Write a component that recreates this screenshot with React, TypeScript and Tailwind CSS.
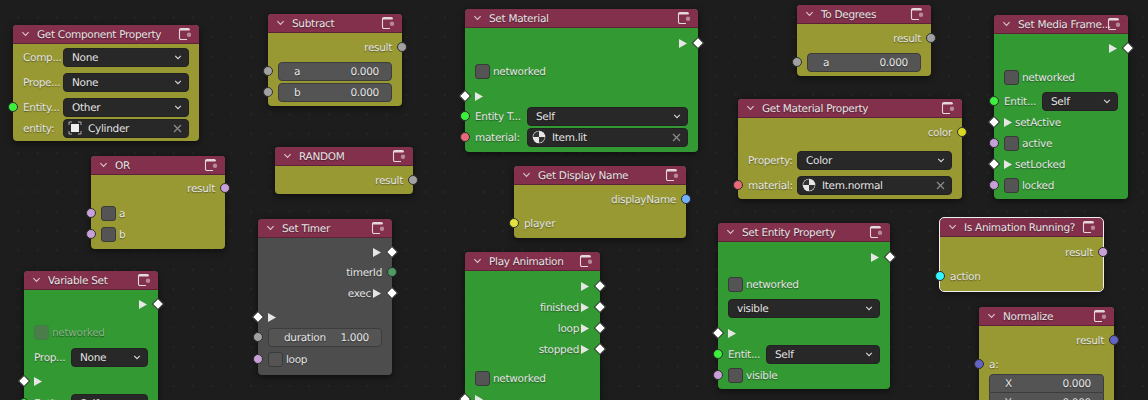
import type { ReactNode } from 'react';

const font = "font-['DejaVu_Sans',sans-serif]";

function Chevron({ className = '' }: { className?: string }) {
  return (
    <svg viewBox="0 0 10 6" className={className} fill="none" stroke="currentColor" strokeWidth="1.3">
      <path d="M1.5 1 5 4.500 8.500 1" />
    </svg>
  );
}

function NodeIcon() {
  return (
    <svg viewBox="0 0 14 14" className="h-[14px] w-[14px] shrink-0" fill="none">
      <path d="M9 12.500H3A1.500 1.500 0 0 1 1.500 11V3A1.500 1.500 0 0 1 3 1.500h7A1.500 1.500 0 0 1 11.500 3" stroke="#e4d8dc" strokeWidth="1.100" />
      <path d="M1.500 3.500v-1l1-1h8l1 1v1z" fill="#e4d8dc" />
      <circle cx="11" cy="7.800" r="2.200" fill="#b78a9a" />
    </svg>
  );
}

function Socket({ color, right = false }: { color: string; right?: boolean }) {
  return (
    <span
      className={`absolute top-1/2 h-[10px] w-[10px] -translate-y-1/2 rounded-full border border-[#2e2e2e] ${
        right ? 'right-0 translate-x-1/2' : 'left-0 -translate-x-1/2'
      } ${color}`}
    />
  );
}

function Diamond({ right = false }: { right?: boolean }) {
  return (
    <span
      className={`absolute top-1/2 h-[7px] w-[7px] -translate-y-1/2 rotate-45 bg-white outline outline-1 outline-[#444] ${
        right ? 'right-0 translate-x-1/2' : 'left-0 -translate-x-1/2'
      }`}
    />
  );
}

function Play() {
  return (
    <svg viewBox="0 0 8 9" className="h-[9px] w-[8px] shrink-0">
      <path d="M0 0 8 4.500 0 9z" fill="#e6e6e6" />
    </svg>
  );
}

function Row({ className = '', children }: { className?: string; children: ReactNode }) {
  return <div className={`relative flex h-5 items-center px-[10px] ${className}`}>{children}</div>;
}

function ExecOut({ className = '', label }: { className?: string; label?: string }) {
  return (
    <Row className={`justify-end gap-[2px] pr-[11px] ${className}`}>
      {label && <span>{label}</span>}
      <Play />
      <Diamond right />
    </Row>
  );
}

function ExecIn({ className = '', label }: { className?: string; label?: string }) {
  return (
    <Row className={`gap-[3px] ${className}`}>
      <Diamond />
      <Play />
      {label && <span>{label}</span>}
    </Row>
  );
}

function Output({ className = '', label, color }: { className?: string; label: string; color: string }) {
  return (
    <Row className={`justify-end ${className}`}>
      <span>{label}</span>
      <Socket color={color} right />
    </Row>
  );
}

function Input({ className = '', label, color }: { className?: string; label: string; color: string }) {
  return (
    <Row className={className}>
      <Socket color={color} />
      <span>{label}</span>
    </Row>
  );
}

function Checkbox({ dim = false }: { dim?: boolean }) {
  return (
    <span
      className={`h-[15px] w-[15px] shrink-0 rounded-[3px] border ${
        dim ? 'border-[#3f7f3f] bg-[#4b7d4b]' : 'border-[#3a3a3a] bg-[#545454]'
      }`}
    />
  );
}

function Check({ className = '', label, color, dim = false }: { className?: string; label: string; color?: string; dim?: boolean }) {
  return (
    <Row className={`gap-[3px] ${className}`}>
      {color && <Socket color={color} />}
      <Checkbox dim={dim} />
      <span className={dim ? 'text-[#86b586]' : ''}>{label}</span>
    </Row>
  );
}

function Select({ value }: { value: string }) {
  return (
    <div className="flex h-[19px] min-w-0 flex-1 items-center justify-between rounded-[4px] border border-[#222] bg-[#282828] pl-[8px] pr-[6px]">
      <span>{value}</span>
      <Chevron className="h-[5px] w-[8px] text-[#ddd]" />
    </div>
  );
}

function SelectRow({ className = '', label, labelWidth, value, color }: { className?: string; label?: string; labelWidth?: string; value: string; color?: string }) {
  return (
    <Row className={className}>
      {color && <Socket color={color} />}
      {label && <span className={`shrink-0 ${labelWidth}`}>{label}</span>}
      <Select value={value} />
    </Row>
  );
}

function Picker({ className = '', label, labelWidth, value, color, icon }: { className?: string; label: string; labelWidth: string; value: string; color?: string; icon: ReactNode }) {
  return (
    <Row className={className}>
      {color && <Socket color={color} />}
      <span className={`shrink-0 ${labelWidth}`}>{label}</span>
      <div className="flex h-[19px] min-w-0 flex-1 items-center rounded-[4px] border border-[#222] bg-[#282828] pl-[4px] pr-[6px]">
        {icon}
        <span className="ml-[6px] flex-1">{value}</span>
        <svg viewBox="0 0 9 9" className="h-[9px] w-[9px]" fill="none" stroke="#8d8d8d" strokeWidth="1.200">
          <path d="M1 1l7 7M8 1 1 8" />
        </svg>
      </div>
    </Row>
  );
}

function CubeIcon() {
  return (
    <svg viewBox="0 0 14 14" className="h-[14px] w-[14px] shrink-0" fill="none">
      <rect x="3" y="3" width="8" height="8" fill="#eee" />
      <path d="M1 4V1h3M10 1h3v3M13 10v3h-3M4 13H1v-3" stroke="#bbb" strokeWidth="0.900" />
    </svg>
  );
}

function MaterialIcon() {
  return (
    <svg viewBox="0 0 14 14" className="h-[14px] w-[14px] shrink-0">
      <circle cx="7" cy="7" r="6.300" fill="#e6e6e6" />
      <path d="M7 1.200A5.800 5.800 0 0 0 1.200 7H7zM7 7h5.800A5.800 5.800 0 0 1 7 12.800z" fill="#333" />
    </svg>
  );
}

function Field({ className = '', label, value, color }: { className?: string; label: string; value: string; color?: string }) {
  return (
    <Row className={className}>
      {color && <Socket color={color} />}
      <div className="flex h-[19px] flex-1 items-center justify-between rounded-[4px] border border-[#3d3d3d] bg-[#545454] pl-[15px] pr-[12px]">
        <span>{label}</span>
        <span>{value}</span>
      </div>
    </Row>
  );
}

function Node({ className, title, selected = false, children }: { className: string; title: string; selected?: boolean; children: ReactNode }) {
  return (
    <div
      className={`absolute rounded-[4px] shadow-[0_2px_6px_rgba(0,0,0,0.55)] ${selected ? 'outline outline-1 outline-[#f0f0f0]' : ''} ${className}`}
    >
      <div className="flex h-[19px] items-center rounded-t-[4px] border-b border-[#5d2236] bg-[#83304c] pl-[8px] pr-[7px] text-[#e6e6e6]">
        <Chevron className="h-[6px] w-[9px] shrink-0 text-[#d8c3ca]" />
        <span className="ml-[7px] min-w-0 flex-1 whitespace-nowrap">{title}</span>
        <NodeIcon />
      </div>
      {children}
    </div>
  );
}

const olive = 'bg-[#999933]';
const green = 'bg-[#339933]';
const gray = 'bg-[#4d4d4d]';

const entity = 'bg-[#3df03d]';
const material = 'bg-[#e8697a]';
const bool = 'bg-[#c8a0d8]';
const float = 'bg-[#a1a1a1]';
const vector = 'bg-[#6363c7]';

export default function App() {
  return (
    <div
      className={`relative h-[400px] w-[1148px] overflow-hidden bg-[#1d1d1d] bg-[radial-gradient(circle,#262626_1px,transparent_1px)] bg-[size:19.4px_19.4px] bg-[position:8.6px_7.8px] text-[10.5px] leading-[13px] tracking-[-0.3px] text-[#e6e6e6] [text-rendering:geometricPrecision] [text-shadow:0_1px_1px_rgba(0,0,0,0.45)] [&_span]:pt-[2px] ${font}`}
    >
      <Node className={`left-[13px] top-[25px] h-[116px] w-[186px] ${olive}`} title="Get Component Property">
        <SelectRow className="mt-[3px]" label="Comp..." labelWidth="w-[40px]" value="None" />
        <SelectRow className="mt-[5px]" label="Prope..." labelWidth="w-[40px]" value="None" />
        <SelectRow className="mt-[5px]" label="Entity..." labelWidth="w-[40px]" value="Other" color={entity} />
        <Picker className="mt-px" label="entity:" labelWidth="w-[40px]" value="Cylinder" icon={<CubeIcon />} />
      </Node>

      <Node className={`left-[268px] top-[14px] h-[92px] w-[134px] ${olive}`} title="Subtract">
        <Output className="mt-[4px]" label="result" color={float} />
        <Field className="mt-[4px]" label="a" value="0.000" color={float} />
        <Field className="mt-px" label="b" value="0.000" color={float} />
      </Node>

      <Node className={`left-[91px] top-[156px] h-[93px] w-[134px] ${olive}`} title="OR">
        <Output className="mt-[3px]" label="result" color={bool} />
        <Check className="mt-[5px]" label="a" color={bool} />
        <Check className="mt-px" label="b" color={bool} />
      </Node>

      <Node className={`left-[275px] top-[147px] h-[47px] w-[138px] ${olive}`} title="RANDOM">
        <Output className="mt-[4px]" label="result" color={float} />
      </Node>

      <Node className={`left-[258px] top-[219px] h-[156px] w-[134px] ${gray}`} title="Set Timer">
        <ExecOut className="mt-[4px]" />
        <Output className="mt-0" label="timerId" color="bg-[#4f9a60]" />
        <ExecOut className="mt-px" label="exec" />
        <ExecIn className="mt-[4px]" />
        <Field className="mt-0" label="duration" value="1.000" color={float} />
        <Check className="mt-[2px]" label="loop" color={bool} />
      </Node>

      <Node className={`left-[465px] top-[9px] h-[143px] w-[233px] ${green}`} title="Set Material">
        <ExecOut className="mt-[5px]" />
        <Check className="mt-[8px]" label="networked" />
        <ExecIn className="mt-[5px]" />
        <SelectRow className="mt-0" label="Entity T..." labelWidth="w-[52px]" value="Self" color={entity} />
        <Picker className="mt-px" label="material:" labelWidth="w-[52px]" value="Item.lit" color={material} icon={<MaterialIcon />} />
      </Node>

      <Node className={`left-[514px] top-[166px] h-[72px] w-[172px] ${olive}`} title="Get Display Name">
        <Output className="mt-[4px]" label="displayName" color="bg-[#70b2ff]" />
        <Input className="mt-[4px]" label="player" color="bg-[#e3e33f]" />
      </Node>

      <Node className={`left-[465px] top-[252px] h-[170px] w-[135px] ${green}`} title="Play Animation">
        <ExecOut className="mt-[5px]" />
        <ExecOut className="mt-px" label="finished" />
        <ExecOut className="mt-px" label="loop" />
        <ExecOut className="mt-px" label="stopped" />
        <Check className="mt-[9px]" label="networked" />
        <ExecIn className="mt-px" />
      </Node>

      <Node className={`left-[797px] top-[5px] h-[71px] w-[134px] ${olive}`} title="To Degrees">
        <Output className="mt-[4px]" label="result" color={float} />
        <Field className="mt-[4px]" label="a" value="0.000" color={float} />
      </Node>

      <Node className={`left-[738px] top-[99px] h-[100px] w-[224px] ${olive}`} title="Get Material Property">
        <Output className="mt-[4px]" label="color" color="bg-[#d8d824]" />
        <SelectRow className="mt-[8px]" label="Property:" labelWidth="w-[49px]" value="Color" />
        <Picker className="mt-[5px]" label="material:" labelWidth="w-[49px]" value="Item.normal" color={material} icon={<MaterialIcon />} />
      </Node>

      <Node className={`left-[718px] top-[223px] h-[166px] w-[172px] ${green}`} title="Set Entity Property">
        <ExecOut className="mt-[5px]" />
        <Check className="mt-[7px]" label="networked" />
        <SelectRow className="mt-[4px]" value="visible" />
        <ExecIn className="mt-[5px]" />
        <SelectRow className="mt-px" label="Entit..." labelWidth="w-[38px]" value="Self" color={entity} />
        <Check className="mt-px" label="visible" color={bool} />
      </Node>

      <Node className={`left-[940px] top-[218px] h-[73px] w-[163px] ${olive}`} title="Is Animation Running?" selected>
        <Output className="mt-[5px]" label="result" color={bool} />
        <Input className="mt-[4px]" label="action" color="bg-[#33f5ff]" />
      </Node>

      <Node className={`left-[979px] top-[307px] h-[130px] w-[135px] ${olive}`} title="Normalize">
        <Output className="mt-[4px]" label="result" color={vector} />
        <Input className="mt-[4px]" label="a:" color={vector} />
        <div className="mt-0 px-[10px]">
          <div className="flex h-[19px] items-center justify-between rounded-t-[4px] border border-[#3d3d3d] bg-[#545454] pl-[15px] pr-[12px]">
            <span>X</span>
            <span>0.000</span>
          </div>
          <div className="flex h-[19px] items-center justify-between rounded-b-[4px] border border-t-0 border-[#3d3d3d] bg-[#545454] pl-[15px] pr-[12px]">
            <span>Y</span>
            <span>0.000</span>
          </div>
        </div>
      </Node>

      <Node className={`left-[994px] top-[15px] h-[184px] w-[134px] ${green}`} title="Set Media Frame...">
        <ExecOut className="mt-[4px]" />
        <Check className="mt-[9px]" label="networked" />
        <SelectRow className="mt-[4px]" label="Entit..." labelWidth="w-[38px]" value="Self" color={entity} />
        <ExecIn className="mt-px" label="setActive" />
        <Check className="mt-px" label="active" color={bool} />
        <ExecIn className="mt-px" label="setLocked" />
        <Check className="mt-px" label="locked" color={bool} />
      </Node>

      <Node className={`left-[24px] top-[271px] h-[170px] w-[134px] ${green}`} title="Variable Set">
        <ExecOut className="mt-[4px]" />
        <Check className="mt-[8px]" label="networked" dim />
        <SelectRow className="mt-[5px]" label="Prop..." labelWidth="w-[37px]" value="None" />
        <ExecIn className="mt-[4px]" />
        <SelectRow className="mt-[2px]" label="Entity..." labelWidth="w-[37px]" value="Self" color={entity} />
      </Node>
    </div>
  );
}
